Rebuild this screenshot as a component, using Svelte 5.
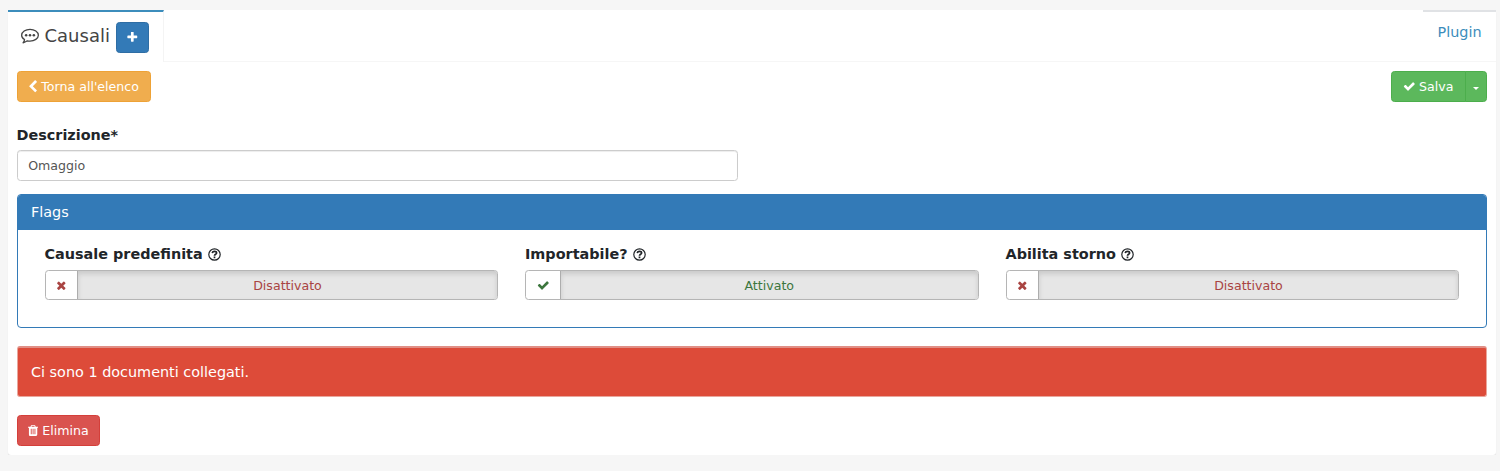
<script>
  const flags = [
    { label: 'Causale predefinita', on: false },
    { label: 'Importabile?', on: true },
    { label: 'Abilita storno', on: false }
  ];
  const icons = {
    check: 'M1671 566q0 40-28 68l-724 724-136 136q-28 28-68 28t-68-28l-136-136-362-362q-28-28-28-68t28-68l136-136q28-28 68-28t68 28l294 295 656-657q28-28 68-28t68 28l136 136q28 28 28 68z',
    times: 'M1490 1322q0 40-28 68l-136 136q-28 28-68 28t-68-28l-294-294-294 294q-28 28-68 28t-68-28l-136-136q-28-28-28-68t28-68l294-294-294-294q-28-28-28-68t28-68l136-136q28-28 68-28t68 28l294 294 294-294q28-28 68-28t68 28l136 136q28 28 28 68t-28 68l-294 294 294 294q28 28 28 68z',
    plus: 'M1600 736v192q0 40-28 68t-68 28h-416v416q0 40-28 68t-68 28h-192q-40 0-68-28t-28-68v-416h-416q-40 0-68-28t-28-68v-192q0-40 28-68t68-28h416v-416q0-40 28-68t68-28h192q40 0 68 28t28 68v416h416q40 0 68 28t28 68z',
    left: 'M1427 301l-531 531 531 531q19 19 19 45t-19 45l-166 166q-19 19-45 19t-45-19l-742-742q-19-19-19-45t19-45l742-742q19-19 45-19t45 19l166 166q19 19 19 45t-19 45z',
    trash: 'M704 1376v-704q0-14-9-23t-23-9h-64q-14 0-23 9t-9 23v704q0 14 9 23t23 9h64q14 0 23-9t9-23zm256 0v-704q0-14-9-23t-23-9h-64q-14 0-23 9t-9 23v704q0 14 9 23t23 9h64q14 0 23-9t9-23zm256 0v-704q0-14-9-23t-23-9h-64q-14 0-23 9t-9 23v704q0 14 9 23t23 9h64q14 0 23-9t9-23zm-544-992h448l-48-117q-7-9-17-11h-317q-10 2-17 11zm928 32v64q0 14-9 23t-23 9h-96v948q0 83-47 143.500t-113 60.500h-832q-66 0-113-58.500t-47-141.500v-952h-96q-14 0-23-9t-9-23v-64q0-14 9-23t23-9h309l70-167q15-37 54-63t79-26h320q40 0 79 26t54 63l70 167h309q14 0 23 9t9 23z'
  };
</script>

{#snippet icon(name, box = '0 0 1792 1792', w = 12.6, h = 12.6)}
  <svg class="icon" width={w} height={h} viewBox={box} fill="currentColor"><path d={icons[name]} /></svg>
{/snippet}

<main class="card">
  <header class="tabs">
    <div class="tab active">
      <svg class="bubble" width="18" height="18" viewBox="0 0 1792 1792" fill="none" stroke="currentColor">
        <path stroke-width="128" stroke-linejoin="round" d="M896 240C454 240 64 490 64 820C64 1000 176 1150 352 1250C338 1370 300 1470 210 1570C390 1530 520 1450 630 1375C710 1393 800 1400 896 1400C1338 1400 1728 1150 1728 820S1338 240 896 240z" />
        <g fill="currentColor" stroke="none"><circle cx="512" cy="820" r="128" /><circle cx="896" cy="820" r="128" /><circle cx="1280" cy="820" r="128" /></g>
      </svg>
      <span class="title">Causali</span>
      <button class="btn primary" aria-label="Aggiungi">{@render icon('plus')}</button>
    </div>
    <a class="tab plugin" href="#plugin">Plugin</a>
  </header>

  <section class="content">
    <div class="toolbar">
      <button class="btn warning">{@render icon('left', '256 0 1280 1792', 9.6, 13.4)}<span>Torna all'elenco</span></button>
      <div class="group">
        <button class="btn success main">{@render icon('check')}<span>Salva</span></button>
        <button class="btn success toggle" aria-label="Altro"><i class="caret"></i></button>
      </div>
    </div>

    <label class="label" for="descrizione">Descrizione*</label>
    <input id="descrizione" value="Omaggio" />

    <div class="panel">
      <div class="heading">Flags</div>
      <div class="flags">
        {#each flags as flag}
          <div class="flag">
            <div class="label">
              <span>{flag.label}</span>
              <svg width="13" height="13" viewBox="0 0 13 13" fill="none" stroke="currentColor">
                <circle cx="6.5" cy="6.5" r="5.7" stroke-width="1.2" />
                <path stroke-width="1.7" d="M4.2 5.1C4.5 3.8 5.3 3.4 6.5 3.4C7.7 3.4 8.6 4.1 8.6 5C8.6 6.3 6.5 6.2 6.5 7.7M6.5 8.6v1.6" />
              </svg>
            </div>
            <div class="switch" class:on={flag.on}>
              <span class="mark">{@render icon(flag.on ? 'check' : 'times')}</span>
              <span class="state">{flag.on ? 'Attivato' : 'Disattivato'}</span>
            </div>
          </div>
        {/each}
      </div>
    </div>

    <div class="alert">Ci sono 1 documenti collegati.</div>
    <button class="btn danger">{@render icon('trash', '192 0 1408 1792', 10.2, 13)}<span>Elimina</span></button>
  </section>
</main>

<style>
  :global(body) { background: #f6f6f6; }
  :global(#app) { display: flow-root; }
  * { box-sizing: border-box; }
  .card {
    margin: 10px 4px 0 8px;
    height: 445px;
    background: #fff;
    border-radius: 3px;
    box-shadow: 0 1px 1px rgba(0, 0, 0, .1);
    font: 14.4px/20px "DejaVu Sans", sans-serif;
    color: #212529;
  }
  .tabs { display: flex; justify-content: space-between; height: 52px; border-bottom: 1px solid #f6f6f6; }
  .active {
    display: flex; align-items: center; width: 156px; height: 52px; padding: 0 0 0 13px;
    border-top: 2px solid #3c8dbc; border-right: 1px solid #f4f4f4; background: #fff; color: #444;
  }
  .bubble { margin-bottom: 2px; }
  .title { font-size: 18px; margin: 0 6px 3px 5.5px; }
  .plugin { width: 73px; border-top: 2px solid #e0e2e5; padding-top: 10px; text-align: center; color: #3c8dbc; text-decoration: none; }
  .content { padding: 9px 9px 0 8.5px; }
  .toolbar { display: flex; justify-content: space-between; height: 31px; }
  .group { display: flex; }
  .btn {
    display: inline-flex; align-items: center; justify-content: center; height: 31px; padding: 0 11.3px; gap: 4px;
    border: 1px solid; border-radius: 3.5px; color: #fff; font: 12.6px/18px "DejaVu Sans", sans-serif; white-space: nowrap;
  }
  .primary { background: #337ab7; border-color: #2e6da4; width: 33px; padding: 0; }
  .warning { background: #f0ad4e; border-color: #eea236; padding: 0 11px 0 10.7px; gap: 3.5px; }
  .success { background: #5cb85c; border-color: #4cae4c; }
  .danger { background: #d9534f; border-color: #d43f3a; padding: 0 10.5px; }
  .main { border-radius: 3.5px 0 0 3.5px; width: 75px; padding: 0 1px 0 0; }
  .toggle { border-radius: 0 3.5px 3.5px 0; width: 22px; margin-left: -1px; padding: 3px 0 0; }
  .caret { border-top: 3px solid; border-left: 3px solid transparent; border-right: 3px solid transparent; }
  .icon { flex: none; display: block; }
  .label { display: flex; align-items: center; gap: 5px; font-weight: 700; line-height: 20px; }
  label.label { margin-top: 22.5px; }
  input {
    display: block; width: 721.5px; height: 31px; margin-top: 5.5px; padding: 0 10.7px;
    border: 1px solid #ccc; border-radius: 3.5px; background: #fff;
    box-shadow: inset 0 1px 1px rgba(0, 0, 0, .075); color: #555; font: 12.6px "DejaVu Sans", sans-serif;
  }
  .panel { height: 134px; margin-top: 13px; border: 1px solid #337ab7; border-radius: 4px; overflow: hidden; }
  .heading { height: 35px; padding-left: 13.5px; background: #337ab7; color: #fff; line-height: 34px; }
  .flags { display: grid; grid-template-columns: repeat(3, 1fr); gap: 27px; padding: 14px 27px 0; }
  .switch {
    display: flex; height: 30px; margin-top: 6px; overflow: hidden;
    border: 1px solid #b5b5b5; border-radius: 3.5px; color: #a94442; font-size: 12.6px; line-height: 29px;
  }
  .mark { display: flex; align-items: center; justify-content: center; width: 31.5px; }
  .state { flex: 1; text-align: center; border-left: 1px solid #adadad; background: #e6e6e6; box-shadow: inset 0 3px 5px rgba(0, 0, 0, .125); }
  .on { color: #3c763d; }
  .on .mark { width: 34px; }
  .alert {
    height: 51px; margin: 18px 0; padding-left: 13.5px; border: 1px solid #e9a79d; border-top: 2px solid #e08f86; border-radius: 3px;
    background: #dd4b39; color: #fff; line-height: 49px;
  }
</style>
